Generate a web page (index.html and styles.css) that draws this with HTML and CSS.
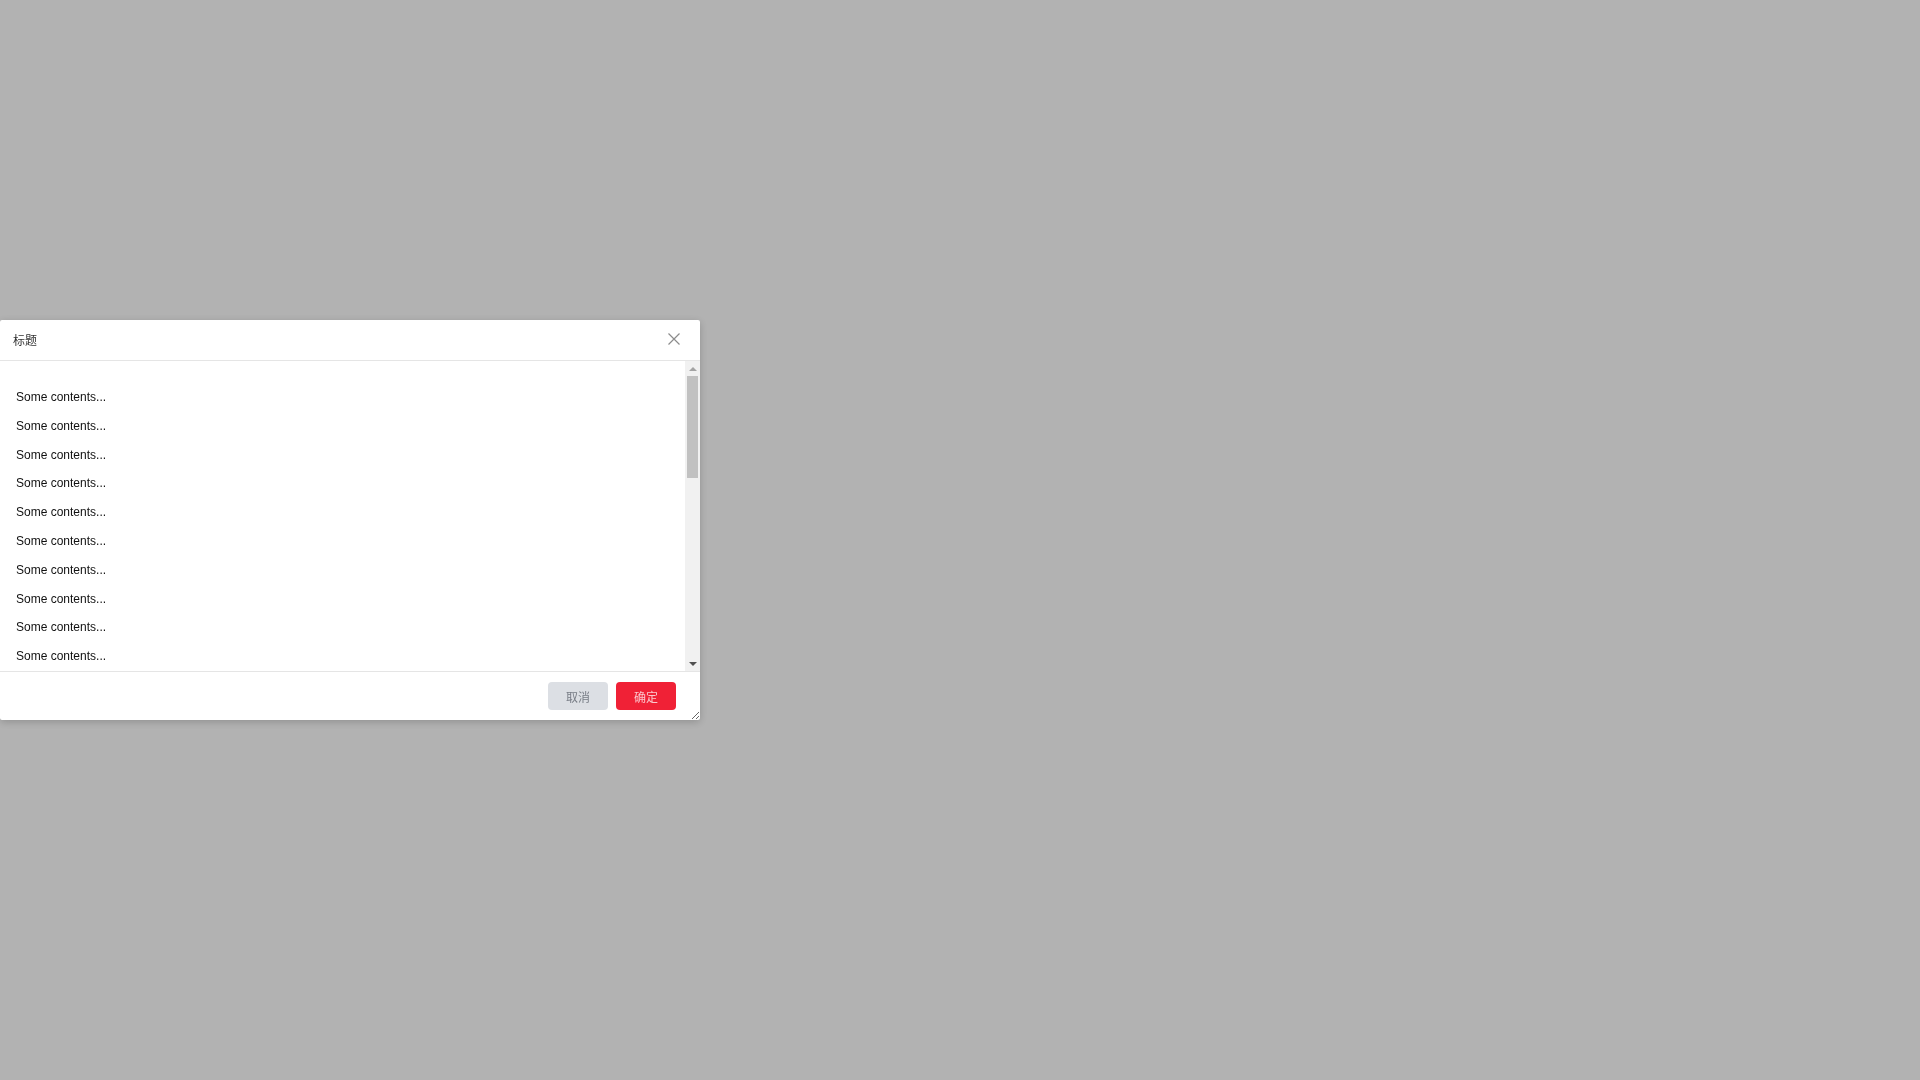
FILE: index.html
```html
<!DOCTYPE html>
<html lang="zh">
<head>
<meta charset="utf-8">
<title>Dialog</title>
<link rel="stylesheet" href="styles.css">
</head>
<body>
<div class="mask"></div>
<div class="dialog">
  <div class="dialog-header">
    <span class="dialog-title">标题</span>
    <button class="dialog-close" aria-label="close">
      <svg width="12" height="12" viewBox="0 0 12 12"><path d="M0.5 0.5 L11.5 11.5 M11.5 0.5 L0.5 11.5" stroke="#8c8c8c" stroke-width="1.2" fill="none"/></svg>
    </button>
  </div>
  <div class="dialog-body">
    <div class="body-content">
      <p>Some contents...</p><p>Some contents...</p><p>Some contents...</p><p>Some contents...</p>
      <p>Some contents...</p><p>Some contents...</p><p>Some contents...</p><p>Some contents...</p>
      <p>Some contents...</p><p>Some contents...</p>
    </div>
    <div class="scrollbar">
      <div class="sb-btn">
        <svg width="8" height="4" viewBox="0 0 8 4"><path d="M0 4 L4 0 L8 4 Z" fill="#a3a3a3"/></svg>
      </div>
      <div class="sb-track"><div class="sb-thumb"></div></div>
      <div class="sb-btn">
        <svg width="8" height="4" viewBox="0 0 8 4"><path d="M0 0 L8 0 L4 4 Z" fill="#505050"/></svg>
      </div>
    </div>
  </div>
  <div class="dialog-footer">
    <button class="btn btn-cancel">取消</button>
    <button class="btn btn-ok">确定</button>
  </div>
</div>
</body>
</html>
```
FILE: styles.css
```css
html, body {
  margin: 0;
  padding: 0;
  height: 100%;
}
body {
  background: #ffffff;
  font-family: "Liberation Sans", "Noto Sans CJK SC", sans-serif;
  font-size: 12px;
  color: #333;
}
.mask {
  position: fixed;
  inset: 0;
  background: rgba(0, 0, 0, 0.3);
}
.dialog {
  position: fixed;
  left: 0;
  top: 320px;
  width: 700px;
  height: 400px;
  background: #fff;
  border-radius: 2px;
  box-shadow: 0 2px 8px rgba(0, 0, 0, 0.2);
  display: flex;
  flex-direction: column;
  overflow: hidden;
  resize: both;
}
.dialog-header {
  height: 40px;
  flex: none;
  border-bottom: 1px solid #e5e5e5;
  display: flex;
  align-items: center;
  justify-content: space-between;
  padding: 0 20px 0 13px;
}
.dialog-title {
  font-size: 12px;
  color: #333;
  margin-top: -1px;
}
.dialog-close {
  border: 0;
  background: none;
  padding: 0;
  width: 12px;
  height: 12px;
  display: flex;
  margin-top: -3px;
  cursor: pointer;
}
.dialog-body {
  flex: 1;
  min-height: 0;
  display: flex;
}
.body-content {
  flex: 1;
  min-width: 0;
  overflow: hidden;
  padding: 16px;
}
.body-content p {
  margin: 12px 0;
  line-height: 1.4;
  color: #111;
  white-space: nowrap;
}
.scrollbar {
  width: 15px;
  flex: none;
  background: #f1f1f1;
  display: flex;
  flex-direction: column;
}
.sb-btn {
  height: 15px;
  flex: none;
  display: flex;
  align-items: center;
  justify-content: center;
}
.sb-track {
  flex: 1;
  padding: 0 2px;
}
.sb-thumb {
  height: 102px;
  background: #c1c1c1;
}
.dialog-footer {
  height: 48px;
  flex: none;
  border-top: 1px solid #e5e5e5;
  display: flex;
  align-items: center;
  justify-content: flex-end;
  gap: 8px;
  padding: 0 24px;
}
.btn {
  width: 60px;
  height: 28px;
  border: 0;
  border-radius: 4px;
  font-family: "Liberation Sans", "Noto Sans CJK SC", sans-serif;
  font-size: 12px;
  padding: 0;
  cursor: pointer;
}
.btn-cancel {
  background: #dcdfe4;
  color: #777c85;
}
.btn-ok {
  background: #f02136;
  color: #fbc6cc;
}
```
